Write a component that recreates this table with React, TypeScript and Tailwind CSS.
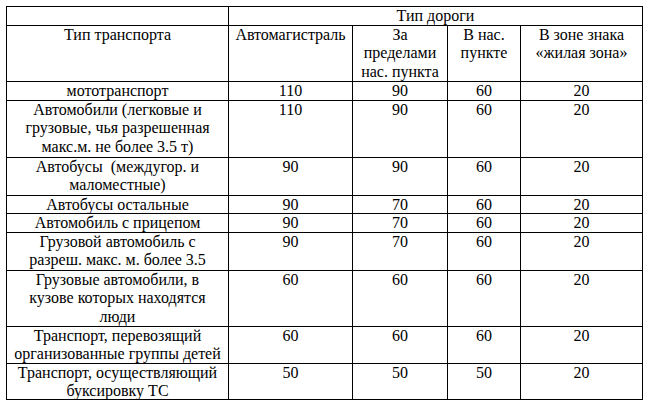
import React from "react";

type Row = { name: string[]; vals: string[] };

const rows: Row[] = [
  { name: ["мототранспорт"], vals: ["110", "90", "60", "20"] },
  {
    name: ["Автомобили (легковые и", "грузовые, чья разрешенная", "макс.м. не более 3.5 т)"],
    vals: ["110", "90", "60", "20"],
  },
  { name: ["Автобусы  (междугор. и", "маломестные)"], vals: ["90", "90", "60", "20"] },
  { name: ["Автобусы остальные"], vals: ["90", "70", "60", "20"] },
  { name: ["Автомобиль с прицепом"], vals: ["90", "70", "60", "20"] },
  { name: ["Грузовой автомобиль с", "разреш. макс. м. более 3.5"], vals: ["90", "70", "60", "20"] },
  {
    name: ["Грузовые автомобили, в", "кузове которых находятся", "люди"],
    vals: ["60", "60", "60", "20"],
  },
  { name: ["Транспорт, перевозящий", "организованные группы детей"], vals: ["60", "60", "60", "20"] },
  { name: ["Транспорт, осуществляющий", "буксировку ТС"], vals: ["50", "50", "50", "20"] },
];

const cell = "border-r border-b border-black text-center whitespace-pre overflow-visible";

function Lines({ lines }: { lines: string[] }) {
  return (
    <>
      {lines.map((l, i) => (
        <div key={i}>{l}</div>
      ))}
    </>
  );
}

export default function App() {
  return (
    <div className="w-[650px] h-[403px] bg-white pt-[6px] pl-[6px] overflow-hidden">
      <div
        className="grid border-l border-t border-black text-black text-[16px] leading-[18.4px] w-[637px]"
        style={{ fontFamily: '"Liberation Serif", "Times New Roman", serif' }}
      >
        <div className="grid grid-cols-[222px_124px_95px_73px_122px] grid-rows-[19px_56px_19px_57px_38px_18px_19px_38px_56px_37px_36px]">
          <div className={cell}></div>
          <div className={`${cell} col-span-4`}>Тип дороги</div>

          <div className={cell}>Тип транспорта</div>
          <div className={cell}>Автомагистраль</div>
          <div className={cell}>
            <Lines lines={["За", "пределами", "нас. пункта"]} />
          </div>
          <div className={cell}>
            <Lines lines={["В нас.", "пункте"]} />
          </div>
          <div className={cell}>
            <Lines lines={["В зоне знака", "«жилая зона»"]} />
          </div>

          {rows.map((r, i) => (
            <React.Fragment key={i}>
              <div className={cell}>
                <Lines lines={r.name} />
              </div>
              {r.vals.map((v, j) => (
                <div key={j} className={cell}>
                  {v}
                </div>
              ))}
            </React.Fragment>
          ))}
        </div>
      </div>
    </div>
  );
}
